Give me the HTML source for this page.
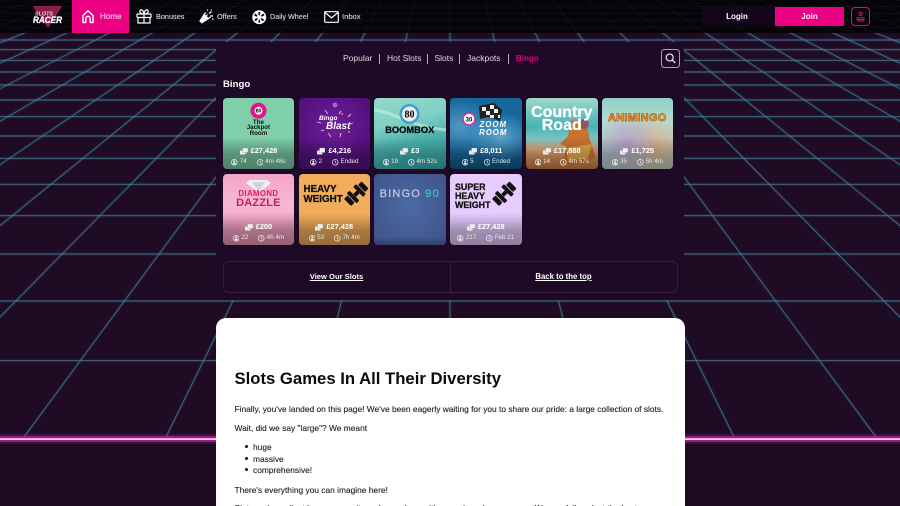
<!DOCTYPE html>
<html><head><meta charset="utf-8"><title>Slots Racer</title>
<style>
*{box-sizing:border-box;margin:0;padding:0}
html,body{width:900px;height:506px;overflow:hidden;background:#1f0c24;font-family:"Liberation Sans",sans-serif}
#root{position:absolute;left:0;top:0;width:900px;height:506px;overflow:hidden;filter:blur(.25px)}
#bg{position:absolute;left:0;top:0}
.t{position:absolute;white-space:nowrap;line-height:1}
nav{position:absolute;left:0;top:0;width:900px;height:33px;background:repeating-linear-gradient(rgba(3,2,5,.88) 0 6px,rgba(12,14,16,.88) 6px 7px)}
.n{color:#dedede;font-size:7.3px;top:13px;-webkit-text-stroke:.1px #dedede}
.ic{position:absolute;overflow:visible}
#panel{position:absolute;left:216px;top:42px;width:468px;height:258px;background:#1e0a26;border-radius:9px}
.tab{color:#ddd;font-size:8.5px;top:54.2px}
.sep{position:absolute;top:54px;width:1px;height:10px;background:#b5adb8}
.c{position:absolute;width:71.5px;height:71px;border-radius:4px;overflow:hidden}
.f{position:absolute;left:0;right:0;bottom:0;height:32px;background:linear-gradient(rgba(0,0,0,0),rgba(0,0,0,.3) 55%,rgba(0,0,0,.38))}
.a,.s{position:absolute;left:0;right:0;display:flex;justify-content:center;align-items:center;color:#fff;line-height:1;white-space:nowrap}
.a{top:49px;font-size:7.4px;font-weight:bold;gap:3px}
.s{top:61px;font-size:6.2px;color:#e8e8e8;gap:2px}
.s i{display:inline-block;width:6px}
.a svg{width:8px;height:8px}.s svg{width:6.5px;height:6.5px}
.ar{position:absolute;line-height:1;text-align:center;white-space:nowrap;left:0;right:0;font-weight:bold}
#btns{position:absolute;left:222.5px;top:261px;width:455px;height:32px;border:1px solid #33203c;border-radius:6px}
#btns b{position:absolute;top:10.5px;font-size:7.6px;color:#fff;text-decoration:underline;line-height:1;white-space:nowrap;width:226px;text-align:center}
#white{position:absolute;left:215.5px;top:318px;width:469px;height:200px;background:#fff;border-radius:10px}
.p{color:#222;font-size:8.4px;left:234.5px;-webkit-text-stroke:.12px #222}
.b{position:absolute;left:244.5px;width:3px;height:3px;background:#111;border-radius:50%}
</style></head><body><div id="root">
<svg id="bg" width="900" height="506" viewBox="0 0 900 506">
<defs>
<path id="g" d="M450-140V437M450-140L592 437M450-140L734 437M450-140L876 437M450-140L1018 437M450-140L1160 437M450-140L1302 437M450-140L1444 437M450-140L1586 437M450-140L1728 437M450-140L1870 437M450-140L2012 437M450-140L2154 437M450-140L2296 437M450-140L308 437M450-140L166 437M450-140L24 437M450-140L-118 437M450-140L-260 437M450-140L-402 437M450-140L-544 437M450-140L-686 437M450-140L-828 437M450-140L-970 437M450-140L-1112 437M450-140L-1254 437M450-140L-1396 437M450-140L-1538 437"/>
<path id="h" d="M0 40H900M0 49.700H900M0 60.300H900M0 72H900M0 85H900M0 100H900M0 116.700H900M0 136H900M0 158.300H900M0 184.300H900M0 215.700H900M0 254H900M0 301H900M0 360.700H900"/>
</defs>
<rect width="900" height="506" fill="#1f0c24"/>
<use href="#g" fill="none" stroke="#3f8aa8" stroke-opacity=".13" stroke-width="3.4"/>
<use href="#h" fill="none" stroke="#3f8aa8" stroke-opacity=".13" stroke-width="3"/>
<use href="#h" fill="none" stroke="#3e7189" stroke-width=".9"/>
<use href="#g" fill="none" stroke="#468aa3" stroke-width=".65"/>
<rect y="434" width="900" height="10" fill="#8a1d7c" opacity=".3"/>
<rect y="436" width="900" height="6" fill="#c42aa0" opacity=".65"/>
<rect y="438.200" width="900" height="1.800" fill="#ffc6f0"/>
</svg>

<nav></nav>
<!-- logo -->
<svg class="ic" style="left:32px;top:4px" width="32" height="25" viewBox="0 0 32 25">
<path d="M2 2.500H29L16 23Z" fill="#8a1b4a" stroke="#b32a58" stroke-width=".8"/>
<text x="3" y="11.500" font-family="Liberation Sans" font-size="5.400" font-weight="bold" font-style="italic" fill="#f3d7e6">SLOTS</text>
<text x="1" y="19" font-family="Liberation Sans" font-size="9.200" font-weight="bold" font-style="italic" fill="#fff" stroke="#fff" stroke-width=".3" textLength="29" lengthAdjust="spacingAndGlyphs">RACER</text>
</svg>
<div style="position:absolute;left:72px;top:0;width:56.500px;height:33px;background:#ec0084"></div>
<svg class="ic" style="left:81px;top:9px" width="14" height="15" viewBox="0 0 14 15" fill="none" stroke="#fff" stroke-width="1.400" stroke-linejoin="round"><path d="M2 13.500V6.500L7 1.700L12 6.500V13.500H9.200V9.500A2.200 2.200 0 0 0 4.800 9.500V13.500Z"/></svg>
<div class="t n" style="left:100px;color:#ffd3ea;font-size:8.1px;top:12.5px">Home</div>
<svg class="ic" style="left:136px;top:8px" width="16" height="16" viewBox="0 0 16 16" fill="none" stroke="#fff" stroke-width="1.200"><rect x="1" y="6" width="14" height="3.500" rx=".8"/><path d="M2 9.500V15H14V9.500M8 6V15"/><path d="M8 6C5 6 3 4.500 4 2.500C5 .8 7.500 2 8 6C8.500 2 11 .8 12 2.500C13 4.500 11 6 8 6Z"/></svg>
<div class="t n" style="left:156px">Bonuses</div>
<svg class="ic" style="left:199px;top:9px" width="15" height="15" viewBox="0 0 15 15" fill="none" stroke="#fff" stroke-width="1.200"><path d="M1 12L5 5.500L9.500 9.500L2.800 13.700Z" fill="#fff"/><path d="M5 5.500L7 3.500M9.500 9.500L11.500 8M7 7L8.500 5.500"/><path d="M8 1.500L9 .5M10 4.500L12.500 2.500M11 7H14M12.500 .5V1.500M13 10H14.500"/></svg>
<div class="t n" style="left:217px">Offers</div>
<svg class="ic" style="left:252px;top:9.500px" width="14.500" height="14.500" viewBox="0 0 15 15"><circle cx="7.500" cy="7.500" r="7.200" fill="#fff"/><g fill="#101014"><path d="M6.300 2.200H8.700L8 5.500H7Z"/><path d="M11.500 3.500L13 5.500L9.800 7L9.200 6Z"/><path d="M12.800 10L11 11.800L8.800 9L9.700 8.300Z"/><path d="M6.500 13H8.500L8 9.800H7Z"/><path d="M2.200 10L4 11.800L6.200 9L5.300 8.300Z"/><path d="M3.500 3.500L2 5.500L5.200 7L5.800 6Z"/></g><circle cx="7.500" cy="7.500" r="1.300" fill="#fff"/></svg>
<div class="t n" style="left:270px;font-size:7.200px">Daily Wheel</div>
<svg class="ic" style="left:324px;top:10.500px" width="15" height="12" viewBox="0 0 15 12" fill="none" stroke="#fff" stroke-width="1.200"><rect x=".7" y=".7" width="13.600" height="10.600" rx=".8"/><path d="M1 1.500L7.500 6.800L14 1.500"/></svg>
<div class="t n" style="left:342px;font-size:7.600px">Inbox</div>

<div style="position:absolute;left:703px;top:7px;width:72px;height:19px;background:#14041b"></div>
<div class="t" style="left:703px;width:68px;text-align:center;top:13px;font-size:8px;font-weight:bold;color:#fff">Login</div>
<div style="position:absolute;left:775px;top:7px;width:69px;height:19px;background:#ec0084"></div>
<div class="t" style="left:775px;width:69px;text-align:center;top:13px;font-size:8px;font-weight:bold;color:#fff">Join</div>
<svg class="ic" style="left:851px;top:7px" width="19" height="19" viewBox="0 0 19 19" fill="none" stroke="#ec0084"><rect x=".5" y=".5" width="18" height="18" rx="3.500"/><circle cx="9.500" cy="6.800" r="1.700"/><path d="M6 12.500H13V10.800H6ZM6 14H13"/></svg>

<div id="panel"></div>
<div class="t tab" style="left:343px">Popular</div><div class="sep" style="left:379px"></div>
<div class="t tab" style="left:387px">Hot Slots</div><div class="sep" style="left:427px"></div>
<div class="t tab" style="left:434.500px">Slots</div><div class="sep" style="left:459px"></div>
<div class="t tab" style="left:467px">Jackpots</div><div class="sep" style="left:508px"></div>
<div class="t tab" style="left:516px;color:#ec0084;font-weight:bold;font-size:8px;top:54.500px">Bingo</div>
<svg class="ic" style="left:661px;top:49px" width="19" height="19" viewBox="0 0 19 19" fill="none"><rect x=".5" y=".5" width="18" height="18" rx="3" stroke="#a9a3ad"/><circle cx="8.700" cy="8.500" r="3.500" stroke="#fff" stroke-width="1.100"/><path d="M11.300 11L14.200 14" stroke="#fff" stroke-width="1.200"/></svg>
<div class="t" style="left:223px;top:80px;font-size:9.600px;font-weight:bold;color:#fff">Bingo</div>

<svg width="0" height="0" style="position:absolute"><defs>
<g id="coin" fill="#eee"><rect x="0" y="3.500" width="5.500" height="4" rx=".6"/><rect x="2.500" y="1" width="5.500" height="4.500" rx=".6" stroke="#888" stroke-width=".3"/></g>
<g id="usr"><circle cx="3.250" cy="3.250" r="2.900" fill="none" stroke="#eee" stroke-width=".7"/><circle cx="3.250" cy="2.400" r="1" fill="#eee"/><path d="M1.600 5.200H4.900L4.300 3.600H2.200Z" fill="#eee"/></g>
<g id="clk" fill="none" stroke="#eee" stroke-width=".7"><circle cx="3.250" cy="3.250" r="2.900"/><path d="M3.250 1.500V3.400L4.600 4.300"/></g>
</defs></svg>

<!-- Card 1 -->
<div class="c" style="left:222.700px;top:98px;background:#7fcfaa">
<svg class="ic" style="left:0;top:0" width="72" height="40"><circle cx="35.500" cy="12.700" r="8" fill="#e8108c"/><circle cx="35.500" cy="12.700" r="4" fill="#fff"/><text x="35.500" y="14.700" font-family="Liberation Sans" font-size="5" font-weight="bold" text-anchor="middle">80</text></svg>
<div class="ar" style="top:21.500px;font-size:6.200px;line-height:5.800px;color:#111;white-space:normal;padding:0 20px">The Jackpot Room</div>
<div class="f"></div>
<div class="a"><svg viewBox="0 0 8 8"><use href="#coin"/></svg>£27,428</div>
<div class="s"><svg viewBox="0 0 6.500 6.500"><use href="#usr"/></svg>74<i></i><svg viewBox="0 0 6.500 6.500"><use href="#clk"/></svg>4m 48s</div>
</div>
<!-- Card 2 -->
<div class="c" style="left:298.500px;top:98px;background:radial-gradient(circle at 50% 40%,#6f1d9c,#51107b 75%)">
<svg class="ic" style="left:0;top:0" width="72" height="45"><circle cx="36" cy="7" r="2.500" fill="#b25ae0"/><g font-family="Liberation Sans" font-weight="bold" font-style="italic" fill="#fff"><text x="20" y="22" font-size="6.500">Bingo</text><text x="27" y="31" font-size="10">Blast</text></g><path d="M26 12L29 16M42 13L40 16M52 16L49 19M18 24L22 25M50 26L54 25M30 36L32 39M42 35L41 39M22 33L25 32" stroke="#f0c0e0" stroke-width=".9"/><path d="M42 15h2v2h-2zM29 35h2v2h-2zM49 33h2v2h-2z" fill="#e8602c"/></svg>
<div class="f" style="opacity:.8"></div>
<div class="a"><svg viewBox="0 0 8 8"><use href="#coin"/></svg>£4,216</div>
<div class="s"><svg viewBox="0 0 6.500 6.500"><use href="#usr"/></svg>2<i></i><svg viewBox="0 0 6.500 6.500"><use href="#clk"/></svg>Ended</div>
</div>
<!-- Card 3 -->
<div class="c" style="left:374px;top:98px;background:linear-gradient(165deg,#93d9cb 0%,#7fd0c4 35%,#4cb2ae 60%,#2b9a9f 100%)">
<svg class="ic" style="left:0;top:0" width="72" height="40"><path d="M0 12C20 14 35 28 72 32" stroke="#c8efe6" stroke-width="3" fill="none" opacity=".6"/><circle cx="35.500" cy="16" r="10" fill="#3f9fd0"/><circle cx="35.500" cy="16" r="7.500" fill="#eee"/><text x="35.500" y="19.500" font-family="Liberation Serif" font-size="10" font-weight="bold" text-anchor="middle">80</text></svg>
<div class="ar" style="top:28px;font-size:9.300px;color:#0a0a0a;-webkit-text-stroke:.25px #0a0a0a">BOOMBOX</div>
<div class="f" style="opacity:.7"></div>
<div class="a"><svg viewBox="0 0 8 8"><use href="#coin"/></svg>£3</div>
<div class="s"><svg viewBox="0 0 6.500 6.500"><use href="#usr"/></svg>19<i></i><svg viewBox="0 0 6.500 6.500"><use href="#clk"/></svg>4m 52s</div>
</div>
<!-- Card 4 -->
<div class="c" style="left:450px;top:98px;background:radial-gradient(ellipse at 70% 55%,#5ea6cc,transparent 45%),radial-gradient(ellipse at 15% 40%,#4f98c4,transparent 45%),linear-gradient(#14689c,#1a6a9e 70%,#0d4f7a)">
<svg class="ic" style="left:0;top:0" width="72" height="45"><path d="M29 8L44 5L52 12L50 23L38 19L30 21Z" fill="#222"/><path d="M32 9h4v4h-4zM40 7h4v4h-4zM36 13h4v4h-4zM44 11h4v4h-4zM48 17h2v3h-2zM40 17h4v3h-4z" fill="#eee"/><circle cx="19" cy="21" r="6" fill="#fff" stroke="#d02ca0" stroke-width="1.500"/><text x="19" y="23.500" font-family="Liberation Sans" font-size="6" font-weight="bold" text-anchor="middle">30</text></svg>
<div class="ar" style="top:23px;padding-left:15px;font-size:7.800px;line-height:8px;color:#fff;font-style:italic;letter-spacing:1px">ZOOM<br>ROOM</div>
<div class="f" style="opacity:.7"></div>
<div class="a"><svg viewBox="0 0 8 8"><use href="#coin"/></svg>£8,011</div>
<div class="s"><svg viewBox="0 0 6.500 6.500"><use href="#usr"/></svg>5<i></i><svg viewBox="0 0 6.500 6.500"><use href="#clk"/></svg>Ended</div>
</div>
<!-- Card 5 -->
<div class="c" style="left:526px;top:98px;background:linear-gradient(#9fd7c9 0%,#47b3b6 40%,#7fc4c4 58%,#e0a878 72%,#b06a38 100%)">
<svg class="ic" style="left:0;top:0" width="72" height="71"><path d="M45 22L60 24L64 42L70 60L46 71L38 64L40 48L34 46L42 38Z" fill="#c8722e"/><path d="M40 50L66 46L62 60L42 62Z" fill="#dca646"/><circle cx="58" cy="26" r="5" fill="#8a5a60"/></svg>
<div class="ar" style="top:7.500px;font-size:16px;line-height:13.500px;color:#fff;-webkit-text-stroke:.3px #fff">Country<br>Road</div>
<div class="f" style="opacity:.7"></div>
<div class="a"><svg viewBox="0 0 8 8"><use href="#coin"/></svg>£17,888</div>
<div class="s"><svg viewBox="0 0 6.500 6.500"><use href="#usr"/></svg>14<i></i><svg viewBox="0 0 6.500 6.500"><use href="#clk"/></svg>4m 57s</div>
</div>
<!-- Card 6 -->
<div class="c" style="left:601.500px;top:98px;background:radial-gradient(ellipse at 35% 65%,#b9a0c8,transparent 50%),radial-gradient(ellipse at 75% 70%,#e0b088,transparent 45%),linear-gradient(#8fcfc8,#b6dcd0 35%,#a8c8c0)">
<div class="ar" style="top:15px;font-size:11px;color:#f6b81f;-webkit-text-stroke:.7px #b9511c;letter-spacing:.3px">ANIMINGO</div>
<div class="f" style="opacity:.8"></div>
<div class="a"><svg viewBox="0 0 8 8"><use href="#coin"/></svg>£1,725</div>
<div class="s"><svg viewBox="0 0 6.500 6.500"><use href="#usr"/></svg>35<i></i><svg viewBox="0 0 6.500 6.500"><use href="#clk"/></svg>5h 4m</div>
</div>
<!-- Card 7 -->
<div class="c" style="left:222.700px;top:174px;background:linear-gradient(#f4a6c6,#f6b8d2 45%,#f097b8)">
<svg class="ic" style="left:0;top:0" width="72" height="25"><path d="M27 6H44L48 9L36 19L23 9Z" fill="#eef0f2"/><path d="M29 8H42L36 17Z" fill="#cfd4d8"/></svg>
<div class="ar" style="top:16px;font-size:7.800px;color:#d9245c;letter-spacing:.4px">DIAMOND</div>
<div class="ar" style="top:24px;font-size:11px;color:#c81e58;letter-spacing:.2px">DAZZLE</div>
<div class="f"></div>
<div class="a"><svg viewBox="0 0 8 8"><use href="#coin"/></svg>£200</div>
<div class="s"><svg viewBox="0 0 6.500 6.500"><use href="#usr"/></svg>22<i></i><svg viewBox="0 0 6.500 6.500"><use href="#clk"/></svg>4h 4m</div>
</div>
<!-- Card 8 -->
<div class="c" style="left:298.500px;top:174px;background:#f2ad5c">
<div class="ar" style="top:11px;left:5px;text-align:left;font-size:9.800px;line-height:9.800px;color:#111;-webkit-text-stroke:.3px #111">HEAVY<br>WEIGHT</div>
<svg class="ic" style="left:45px;top:8px" width="24" height="24" viewBox="0 0 24 24"><g transform="rotate(-45 12 12)" fill="#111"><rect x="0" y="7" width="5" height="10" rx="1"/><rect x="5.800" y="5" width="4" height="14" rx="1"/><rect x="10" y="10" width="5" height="4"/><rect x="15" y="5" width="4" height="14" rx="1"/><rect x="19.800" y="7" width="5" height="10" rx="1"/></g></svg>
<div class="f"></div>
<div class="a"><svg viewBox="0 0 8 8"><use href="#coin"/></svg>£27,428</div>
<div class="s"><svg viewBox="0 0 6.500 6.500"><use href="#usr"/></svg>53<i></i><svg viewBox="0 0 6.500 6.500"><use href="#clk"/></svg>7h 4m</div>
</div>
<!-- Card 9 -->
<div class="c" style="left:374px;top:174px;background:radial-gradient(ellipse at 50% 45%,#4c6aa6,#3f5488 90%)">
<div class="ar" style="top:14.500px;font-size:11px;font-weight:normal;letter-spacing:1.200px;color:#c4cedd;-webkit-text-stroke:.2px #c4cedd">BINGO <span style="color:#3cc8bc;-webkit-text-stroke:.2px #3cc8bc">90</span></div>
<div style="position:absolute;left:0;right:0;bottom:0;height:8px;background:linear-gradient(rgba(0,0,0,0),rgba(0,0,0,.25))"></div>
</div>
<!-- Card 10 -->
<div class="c" style="left:450px;top:174px;background:#e6ccff">
<div class="ar" style="top:9px;left:5px;text-align:left;font-size:8.900px;line-height:9.200px;color:#111;-webkit-text-stroke:.25px #111">SUPER<br>HEAVY<br>WEIGHT</div>
<svg class="ic" style="left:42px;top:8px" width="24" height="24" viewBox="0 0 24 24"><g transform="rotate(-45 12 12)" fill="#111"><rect x="0" y="7" width="5" height="10" rx="1"/><rect x="5.800" y="5" width="4" height="14" rx="1"/><rect x="10" y="10" width="5" height="4"/><rect x="15" y="5" width="4" height="14" rx="1"/><rect x="19.800" y="7" width="5" height="10" rx="1"/></g></svg>
<div class="f"></div>
<div class="a"><svg viewBox="0 0 8 8"><use href="#coin"/></svg>£27,428</div>
<div class="s"><svg viewBox="0 0 6.500 6.500"><use href="#usr"/></svg>217<i></i><svg viewBox="0 0 6.500 6.500"><use href="#clk"/></svg>Feb 21</div>
</div>

<div id="btns">
<b style="left:0">View Our Slots</b>
<div style="position:absolute;left:226.500px;top:0;width:1px;height:30px;background:#33203c"></div>
<b style="left:227px;font-size:7.800px">Back to the top</b>
</div>

<div id="white"></div>
<div class="t" style="left:234.500px;top:371px;font-size:16.700px;font-weight:bold;color:#0a0a0a">Slots Games In All Their Diversity</div>
<div class="t p" style="top:404.500px">Finally, you've landed on this page! We've been eagerly waiting for you to share our pride: a large collection of slots.</div>
<div class="t p" style="top:423.500px">Wait, did we say "large"? We meant</div>
<div class="b" style="top:444.500px"></div><div class="t p" style="top:442.500px;left:253px">huge</div>
<div class="b" style="top:456.500px"></div><div class="t p" style="top:454.500px;left:253px">massive</div>
<div class="b" style="top:468px"></div><div class="t p" style="top:466px;left:253px">comprehensive!</div>
<div class="t p" style="top:485.500px">There's everything you can imagine here!</div>
<div class="t p" style="top:504px">Slots and excellent bonuses await you here, along with many brand-new games. We carefully select the best.</div>
</div></body></html>
